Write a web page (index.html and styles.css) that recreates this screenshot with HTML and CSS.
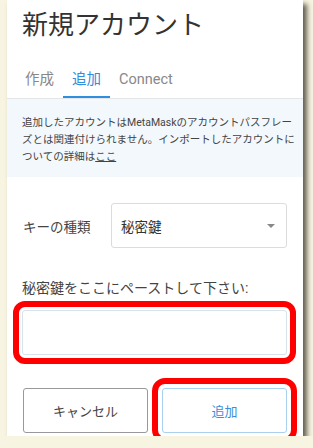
FILE: index.html
```html
<!DOCTYPE html>
<html>
  <head>
    <link rel="stylesheet" href="styles.css">
  </head>
  <body>
    <div class="panel">
      <h1 class="title">新規アカウント</h1>

      <div class="tabs">
        <div class="tab">作成</div>
        <div class="tab tab-active">追加</div>
        <div class="tab">Connect</div>
      </div>

      <div class="notice">
        追加したアカウントはMetaMaskのアカウントパスフレーズとは関連付けられません。インポートしたアカウントについての詳細は<a class="notice-link">ここ</a>
      </div>

      <div class="type-row">
        <div class="type-label">キーの種類</div>
        <div class="select">
          <span>秘密鍵</span>
          <span class="select-caret"></span>
        </div>
      </div>

      <div class="paste-label">秘密鍵をここにペーストして下さい:</div>
      <div class="paste-input highlight"></div>

      <div class="buttons">
        <button class="btn btn-cancel">キャンセル</button>
        <button class="btn btn-add highlight">追加</button>
      </div>
    </div>
  </body>
</html>
```

FILE: styles.css
```css
body {
  margin: 0;
  background-color: #f7f4e1;
  font-family: Roboto, "Noto Sans CJK JP", sans-serif;
  color: #333;
}

.panel {
  margin-left: 7px;
  width: 296px;
  height: 436px;
  background-color: #fff;
  box-shadow: 4px 4px 5px rgba(60, 58, 45, 0.8);
}

.title {
  margin: 0;
  padding: 9px 0 21px 15px;
  font-size: 26px;
  line-height: 32px;
  font-weight: normal;
  color: #333;
}

.tabs {
  display: flex;
  padding-left: 9px;
  border-bottom: 1px solid #e3e6e8;
}

.tab {
  padding: 8px 9px 6px;
  font-size: 14.5px;
  line-height: 20px;
  color: #888;
  border-bottom: 2px solid transparent;
}

.tab-active {
  color: #2f8ede;
  border-bottom-color: #2f8ede;
}

.notice {
  background-color: #f3f8fc;
  padding: 15px 8px 12px 15px;
  font-size: 10.5px;
  line-height: 17px;
  color: #444;
}

.notice-link {
  text-decoration: underline;
}

.type-row {
  display: flex;
  align-items: center;
  margin: 26px 16px 0 16px;
}

.type-label {
  width: 88px;
  font-size: 13.5px;
  color: #444;
}

.select {
  flex: 1;
  height: 43px;
  border: 1px solid #dcdcdc;
  border-radius: 3px;
  display: flex;
  align-items: center;
  justify-content: space-between;
  padding: 0 11px 0 9px;
  font-size: 13.5px;
  color: #333;
}

.select-caret {
  width: 0;
  height: 0;
  border-left: 4px solid transparent;
  border-right: 4px solid transparent;
  border-top: 4px solid #888;
}

.paste-label {
  margin: 30px 0 0 15px;
  font-size: 14px;
  line-height: 20px;
  color: #444;
}

.paste-input {
  margin: 12px 16px 0 15px;
  height: 43px;
  border: 1px solid #d6e2ec;
  border-radius: 3px;
}

.highlight {
  outline: 6px solid #f00;
  outline-offset: 3px;
}

.buttons {
  display: flex;
  gap: 14px;
  margin: 33px 16px 0 16px;
}

.btn {
  flex: 1;
  height: 45px;
  background-color: #fff;
  border-radius: 3px;
  font-family: Roboto, "Noto Sans CJK JP", sans-serif;
  font-size: 13px;
}

.btn-cancel {
  border: 1px solid #999;
  color: #444;
}

.btn-add {
  border: 1px solid #a9d0ef;
  color: #3a8fd8;
  outline-offset: 4px;
}
```
